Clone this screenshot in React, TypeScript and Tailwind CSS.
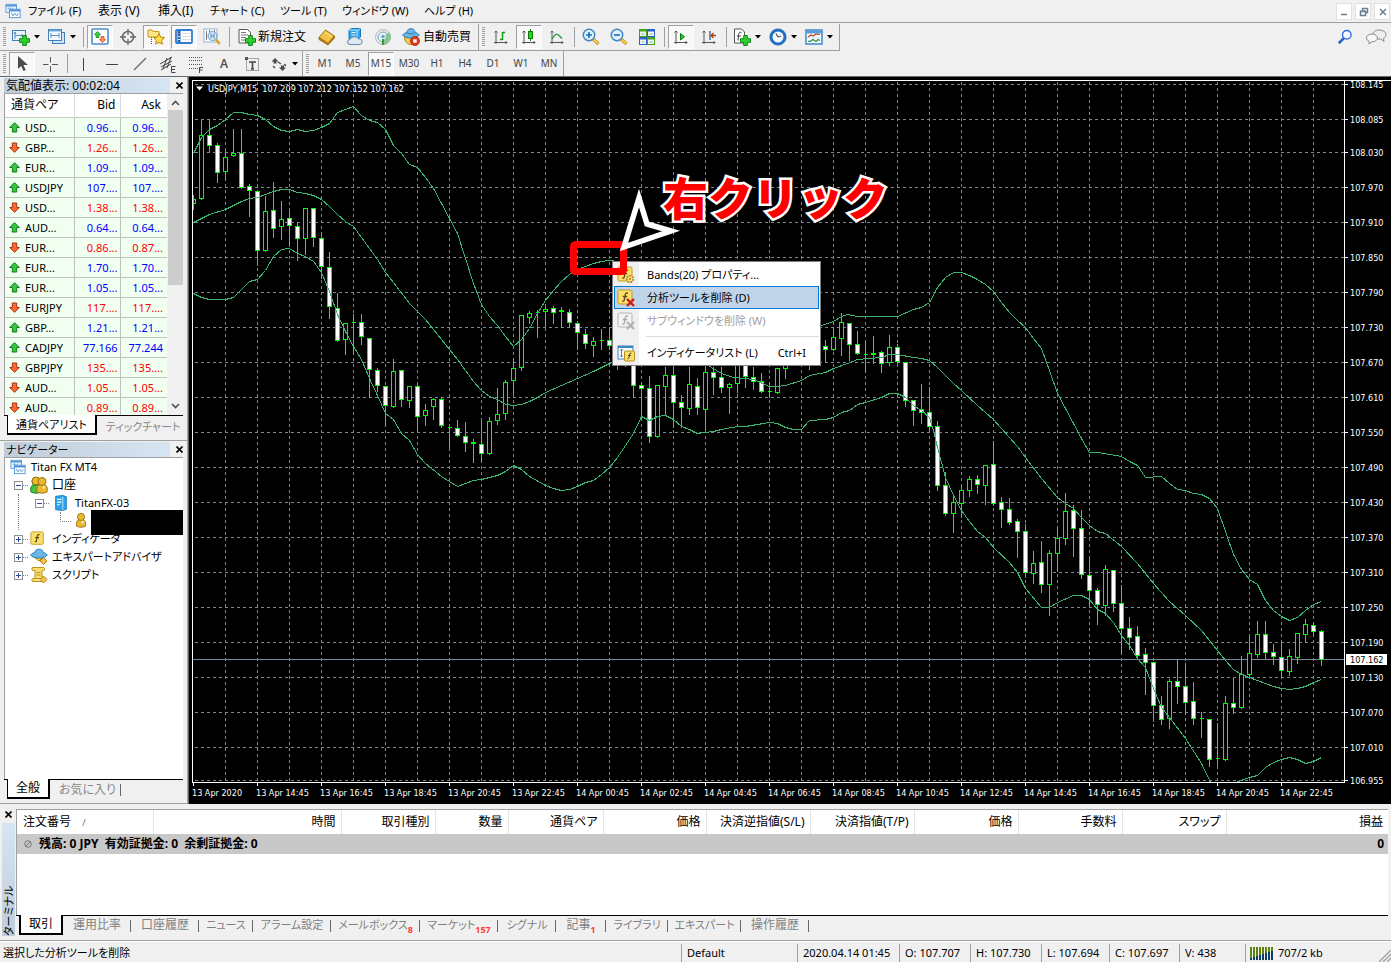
import React from "react";

type Kids = { children?: React.ReactNode };

/* Katakana labels run wide, so they are set one step smaller than kanji ones. */
const labelSize = (t: string) => (/[ァ-ヶー]/.test(t) ? "text-[11px]" : "text-xs");

/* ---------- icons ---------- */

function Svg({ children, s = 18 }: Kids & { s?: number }) {
  return (
    <svg width={s} height={s} viewBox="0 0 18 18" fill="none" className="shrink-0" aria-hidden="true">
      {children}
    </svg>
  );
}

const Plus = ({ x = 7, y = 7 }: { x?: number; y?: number }) => (
  <path
    transform={`translate(${x} ${y})`}
    d="M3.700 .5h3.600v3.200h3.200v3.600H7.300v3.200H3.700V7.300H.5V3.700h3.200z"
    fill="#2fd02f"
    stroke="#0b8a12"
  />
);

const AppIcon = () => (
  <Svg s={16}>
    <rect x="1" y="1.500" width="12" height="9" fill="#e9f4ff" stroke="#5b9bd5" />
    <path d="M1 3h12" stroke="#5b9bd5" strokeWidth="2" />
    <path d="M3 7l2-2 2 3 2-3" stroke="#5b9bd5" />
    <rect x="5" y="7" width="12" height="9.500" fill="#fff" stroke="#4a90d9" />
    <path d="M5 8.500h12" stroke="#4a90d9" strokeWidth="2" />
    <path d="M7 11l2 3.500 2-3 2 3 2-3" stroke="#4a90d9" />
  </Svg>
);
const NewChart = () => (
  <Svg>
    <rect x=".5" y="2.500" width="13" height="10" fill="#eaf4ff" stroke="#3f7fb5" />
    <path d="M3 4v7M2 6l1-2 1 2M3 7.500h8M9.500 6l1.500 1.500L9.500 9" stroke="#5a8fbe" />
    <Plus />
  </Svg>
);
const Profiles = () => (
  <Svg>
    <rect x="4.500" y="4.500" width="12" height="11" fill="#cfe4f7" stroke="#3f7fb5" />
    <rect x=".5" y="1.500" width="13" height="11" fill="#f3f9ff" stroke="#3f7fb5" />
    <path d="M1 2.500h12" stroke="#6aa5dc" strokeWidth="2" />
    <path d="M3 5v5M11 5v5M3 7.500h8" stroke="#5a8fbe" />
  </Svg>
);
const MarketWatchIcon = () => (
  <Svg>
    <rect x="1" y="1" width="16" height="15" rx="1" fill="#fff" stroke="#4a8fd0" strokeWidth="1.600" />
    <path d="M6.500 3.500l3 3H8v3H5v-3H3.500z" fill="#3fd04a" stroke="#168a20" strokeWidth=".8" />
    <path d="M11.500 14.500l-3-3H10v-3h3v3h1.500z" fill="#ff9860" stroke="#d8481c" strokeWidth=".8" />
  </Svg>
);
const DataWindow = () => (
  <Svg>
    <circle cx="9" cy="9" r="5.500" stroke="#666" strokeWidth="1.500" />
    <path d="M9 1v6M9 11v6M1 9h6M11 9h6" stroke="#666" strokeWidth="1.300" />
  </Svg>
);
const NavigatorIcon = () => (
  <Svg>
    <path d="M1 2h4l1 1.500h6V9H1z" fill="#fbe68b" stroke="#c79a1c" />
    <path d="M4.500 9v7" stroke="#555" strokeDasharray="1 1" />
    <path d="M12 5.500l1.700 3.600 3.800.5-2.800 2.700.7 3.900-3.400-1.900-3.400 1.900.7-3.900-2.800-2.700 3.800-.5z" fill="#ffe04a" stroke="#b8860b" />
  </Svg>
);
const TerminalIcon = () => (
  <Svg>
    <rect x="1" y="2" width="16" height="13" rx="1" fill="#fff" stroke="#2f7fd0" strokeWidth="1.800" />
    <path d="M4 3v11" stroke="#1f5fae" strokeWidth="3" />
    <path d="M7 5.500h9M7 8.500h9M7 11.500h9" stroke="#d9dfe6" />
    <path d="M3 5.500h2" stroke="#ff5b3a" />
    <path d="M3 8.500h2M3 11.500h2" stroke="#d9e8ff" />
  </Svg>
);
const Tester = () => (
  <Svg>
    <rect x="1" y="1" width="13" height="13" fill="#fff" stroke="#8fb3d3" />
    <path d="M3.500 3v9M6.500 2v4M11.500 2v4" stroke="#777" />
    <circle cx="9.500" cy="8" r="4.500" fill="#cfe7fa" fillOpacity=".9" stroke="#6d9fc9" />
    <path d="M8 5.500v5M11 5.500v5M8 8h3" stroke="#5a8fbe" />
    <path d="M12.800 11.500l4 4.500" stroke="#d9a520" strokeWidth="2.500" />
  </Svg>
);
const OrderIcon = () => (
  <Svg>
    <path d="M1 1.500h8.500l3 3V15H1z" fill="#fff" stroke="#555" />
    <path d="M3 4.500h5M3 7h7M3 9.500h5M3 12h4" stroke="#777" />
    <Plus />
  </Svg>
);
const Book = () => (
  <Svg>
    <path d="M1 9.500L7.500 2l9 6-6.500 7.500z" fill="#f3c24a" stroke="#a8720c" />
    <path d="M1 9.500v2L10 17l6.500-7V8L10 15.500z" fill="#c98a18" stroke="#8f5f08" strokeWidth=".8" />
    <path d="M7 4.500l6.500 4" stroke="#ffe7a0" />
  </Svg>
);
const Vps = () => (
  <Svg>
    <path d="M3 2l3-1.500h8.500V9L12 11H3z" fill="#2ba5ee" stroke="#1379bb" />
    <path d="M3 2h8v9M11 3l3.500-2.500" stroke="#bfe5ff" />
    <path d="M5.500 4.500h4M5.500 7h4" stroke="#e9f7ff" />
    <path d="M4 16.500a2.500 2.500 0 010-5 4.500 3.800 0 018.500-.5 2.800 2.800 0 011.500 5.500z" fill="#dfe8f5" stroke="#6f86ab" />
  </Svg>
);
const Signals = () => (
  <Svg>
    <circle cx="9" cy="9" r="7.500" fill="#e7edf1" stroke="#a9bccb" />
    <circle cx="9" cy="9" r="5" stroke="#7fa9c6" />
    <path d="M9 9v8a8 8 0 006-13z" fill="#74bd74" fillOpacity=".75" />
    <circle cx="9" cy="8.500" r="2.300" fill="#59a8dc" stroke="#fff" />
    <path d="M9 11v6" stroke="#3c963c" strokeWidth="2" />
  </Svg>
);
const AutoTrade = () => (
  <Svg>
    <path d="M2.500 9c0 5 3 7.500 7 7.500s6-3 6-7.500z" fill="#f6cb58" stroke="#b98313" />
    <path d="M.7 7c1-1.800 3.500-2.300 4.300-2.500C5 1.500 7 .7 9 .7s4 .8 4 3.800c1 .2 3.500 1 4.300 2.500-1 2-5 3-8.300 3S1.500 9 .7 7z" fill="#6bb7e6" stroke="#2c7fb5" />
    <path d="M5 4.800c2 1.500 6 1.500 8 0" stroke="#2c7fb5" />
    <circle cx="13" cy="13" r="4.500" fill="#e43a1c" stroke="#a81e08" strokeWidth=".8" />
    <rect x="11.300" y="11.300" width="3.400" height="3.400" fill="#fff" />
  </Svg>
);
const Axes = () => (
  <path d="M4 3v13M2 14.500h13M2.500 4.500L4 3l1.500 1.500M13.500 13l1.500 1.500-1.500 1.500" stroke="#555" />
);
const BarChart = () => (
  <Svg>
    <Axes />
    <path d="M10.500 4v8M10.500 4.500h2.500M8 11.500h2.500" stroke="#159a15" strokeWidth="1.500" />
  </Svg>
);
const CandleIcon = () => (
  <Svg>
    <Axes />
    <path d="M10.500 1v12" stroke="#0b7d0b" />
    <rect x="8.500" y="3.500" width="4" height="7" fill="#25d625" stroke="#0b7d0b" />
  </Svg>
);
const LineIcon = () => (
  <Svg>
    <Axes />
    <path d="M4 11c3-5 5-6 7-3.500l3 3" stroke="#1f9a3a" strokeWidth="1.300" />
  </Svg>
);
const ZoomIcon = ({ minus }: { minus?: boolean }) => (
  <Svg>
    <path d="M11 11l5.500 5" stroke="#c8951a" strokeWidth="3.200" />
    <path d="M11.500 11.500l4.500 4" stroke="#ffdb66" strokeWidth="1.500" />
    <circle cx="7" cy="7" r="5.700" fill="#dff1ff" stroke="#3f86c4" strokeWidth="1.500" />
    <path d={minus ? "M4 7h6" : "M4 7h6M7 4v6"} stroke="#1d6fb4" strokeWidth="1.600" />
  </Svg>
);
const Tile = () => (
  <Svg>
    <rect x="1" y="1" width="8" height="8" fill="#3fa51c" />
    <rect x="9" y="1" width="8" height="8" fill="#2f62d0" />
    <rect x="1" y="9" width="8" height="8" fill="#2f62d0" />
    <rect x="9" y="9" width="8" height="8" fill="#3fa51c" />
    <path d="M2 3.500h6v4.500H2zM10 3.500h6v4.500h-6zM2 11.500h6V16H2zM10 11.500h6V16h-6z" fill="#eef5ea" />
    <path d="M3.500 6h3M11.500 6h3M3.500 14h3M11.500 14h3" stroke="#9bb39b" />
  </Svg>
);
const AutoScroll = () => (
  <Svg>
    <Axes />
    <path d="M8.500 5.500v6.500l4-3.200z" fill="#25c625" stroke="#0b7d0b" />
  </Svg>
);
const Shift = () => (
  <Svg>
    <Axes />
    <path d="M10 3v9" stroke="#2a5f9a" strokeWidth="1.300" />
    <path d="M16 7.500h-4.500M13.500 5l-2.500 2.500 2.500 2.500" stroke="#b04010" strokeWidth="1.300" />
  </Svg>
);
const AddIndicator = () => (
  <Svg>
    <path d="M1.500 1h7l3 3v11h-10z" fill="#fff" stroke="#555" />
    <path d="M8.500 4.500c-2-.8-2.500 0-2.800 2L5 12.500M3.800 8h4" stroke="#444" />
    <Plus />
  </Svg>
);
const Clock = () => (
  <Svg>
    <circle cx="9" cy="9" r="6.800" fill="#f4f9ff" stroke="#1c6fc9" strokeWidth="2.600" />
    <path d="M9 9l3.200-1M9 9L7 5.500" stroke="#555" strokeWidth="1.300" />
    <circle cx="9" cy="9" r="8.200" stroke="#114d94" strokeWidth=".6" />
  </Svg>
);
const Template = () => (
  <Svg>
    <rect x="1" y="2" width="16" height="14" fill="#fff" stroke="#4a8fd0" strokeWidth="1.600" />
    <path d="M1 4h16" stroke="#5b9bd5" strokeWidth="3" />
    <path d="M3 9l3-2 2 1 3-2 4 .5" stroke="#b03a1a" strokeWidth="1.200" />
    <path d="M3 13l2 .5 3-2 3 2 2-2 2 1" stroke="#1e8f3a" strokeWidth="1.200" />
    <path d="M2 10h14" stroke="#c9dff2" />
  </Svg>
);
const CursorIcon = () => (
  <Svg>
    <path d="M5 1v13l3.200-3 2.300 5 2.200-1-2.300-4.900H15z" fill="#4b4b4b" />
  </Svg>
);
const Cross = () => (
  <Svg>
    <path d="M9.500 2v5.500M9.500 11v6M2 9.500h5.500M11 9.500h6" stroke="#555" />
  </Svg>
);
const VLine = () => <Svg><path d="M8.500 3v13" stroke="#444" /></Svg>;
const HLine = () => <Svg><path d="M3 9.500h12" stroke="#444" /></Svg>;
const Diag = () => <Svg><path d="M3 15L15 3" stroke="#666" strokeWidth="1.200" /></Svg>;
const Channel = () => (
  <Svg>
    <path d="M1 9L13 2M2 12l11-6M2 15l10-6M4 14L8 3M8 13l4-11" stroke="#444" />
    <path d="M16.500 11.500h-4v6h4M12.500 14.500h3.500" stroke="#444" />
  </Svg>
);
const Fib = () => (
  <Svg>
    <path d="M2 2.500h14M2 5.500h14M2 9.500h14M2 13.500h9" stroke="#555" strokeDasharray="1 1" />
    <path d="M16 12.500h-3.500V18M12.500 15h3" stroke="#444" />
  </Svg>
);
const TextLabel = () => (
  <Svg>
    <rect x="3.500" y="3.500" width="12" height="12" stroke="#555" strokeDasharray="1 1" />
    <rect x="2" y="2" width="3" height="3" fill="#555" />
    <path d="M6 7h7M9.500 7v7M8 14h3" stroke="#444" strokeWidth="1.600" />
  </Svg>
);
const Shapes = () => (
  <Svg>
    <path d="M5 3l3.500 3.500H6.500v2h-3v-2H1.500zM12.500 16L9 12.500h2v-2h3v2h2z" fill="#4b4b4b" />
    <path d="M3 11l2 2M8 7l3 2M14 9.500l2 1" stroke="#4b4b4b" strokeWidth="1.400" />
  </Svg>
);
const SearchIcon = () => (
  <Svg s={16}>
    <path d="M8 10l-6 6" stroke="#2b5fd0" strokeWidth="3" />
    <circle cx="11" cy="6.500" r="4.800" fill="#f3f8ff" stroke="#2f66d8" strokeWidth="1.500" />
  </Svg>
);
const Chat = () => (
  <svg width="22" height="18" viewBox="0 0 22 18" fill="none" aria-hidden="true">
    <path d="M14 2c4 0 7 2 7 4.500 0 1.800-1 3-2.500 3.800l.5 3-3.500-2.300C11 11.500 8 9 8 6.500S10.500 2 14 2z" fill="#eee" stroke="#8a8a8a" />
    <path d="M7 6c3 0 5.500 1.700 5.500 4S10 13.800 7 13.800L4 16l.2-2.800C2.500 12.500 1.500 11.500 1.500 10c0-2.300 2.500-4 5.500-4z" fill="#f8f8f8" stroke="#8a8a8a" />
  </svg>
);
const UpArrow = () => (
  <svg width="11" height="11" viewBox="0 0 11 11" className="shrink-0" aria-hidden="true">
    <path d="M5.500.7l4.800 4.800H7.700V10H3.300V5.500H.7z" fill="#35c83f" stroke="#127a1c" />
  </svg>
);
const DownArrow = () => (
  <svg width="11" height="11" viewBox="0 0 11 11" className="shrink-0" aria-hidden="true">
    <path d="M5.500 10.300L.7 5.500h2.600V1h4.400v4.500h2.600z" fill="#ff6a33" stroke="#a8320c" />
  </svg>
);
const Person = ({ x = 0, fill = "#e8b930", line = "#9a7410" }) => (
  <g transform={`translate(${x} 0)`}>
    <path d="M2 16c-1-4 .5-7 3-7.500h4c2.500.5 4 3.500 3 7.500-3 1.500-7 1.500-10 0z" fill={fill} stroke={line} />
    <circle cx="7" cy="5.500" r="4" fill={fill} stroke={line} />
    <path d="M7.500 10l1 4 2-3.500" fill="#fff6cf" />
  </g>
);
const Accounts = () => (
  <Svg>
    <Person x={-1} fill="#3fc43f" line="#1b7d1b" />
    <circle cx="6" cy="5" r="4" fill="#e8b930" stroke="#9a7410" />
    <Person x={5} />
  </Svg>
);
const PersonIcon = () => <Svg s={16}><Person x={2} /></Svg>;
const Server = () => (
  <Svg s={16}>
    <path d="M3 1.500l8-1 4 1.500v14l-4 1.500-8-1z" fill="#2ba5ee" stroke="#1379bb" />
    <path d="M11 2v15" stroke="#bfe5ff" />
    <path d="M4.500 5h5M4.500 8h5M4.500 11h3" stroke="#fff" strokeWidth="1.300" />
  </Svg>
);
const FBox = ({ gray }: { gray?: boolean }) => (
  <>
    <rect x="1" y="1" width="14" height="14" rx="1.500" fill={gray ? "#f3f3f3" : "#fadf6d"} stroke={gray ? "#b5b5b5" : "#c39a22"} />
    <path d="M11 4.300c-1.800-.8-2.600 0-2.900 2l-.8 4.500c-.2 1.200-.8 1.500-2 1M5.800 7.500h4.400" stroke={gray ? "#aaa" : "#5c4a12"} strokeWidth="1.300" />
  </>
);
const IndicatorIcon = () => <Svg s={16}><FBox /></Svg>;
const Expert = () => (
  <Svg>
    <path d="M4 9l5 4 4-4z" fill="#f6cb58" stroke="#b98313" />
    <path d="M.7 7c1-1.800 3.500-2.300 4.300-2.500C5 2 7 1.200 9 1.200s4 .8 4 3.300c1 .2 3.500 1 4.300 2.500-1 2-5 3-8.300 3S1.500 9 .7 7z" fill="#6bb7e6" stroke="#2c7fb5" />
    <path d="M13.500 9.500l3.500 3.500-3.500 3.500-3.500-3.500z" fill="#f3c24a" stroke="#b98313" />
  </Svg>
);
const Script = () => (
  <Svg>
    <path d="M3 1.500h10.500c1.500 0 1.500 3 0 3H12v8h-7v-8H3c-1.500 0-1.500-3 0-3z" fill="#fbe06b" stroke="#b98f1e" />
    <path d="M5 12.500H3c-1.500 0-1.500 3 0 3h9" fill="#fbe06b" stroke="#b98f1e" />
    <path d="M6.500 6.500h4M6.500 9h4" stroke="#b98f1e" />
    <path d="M13.500 10l3.500 3.500-3.500 3.500-3.500-3.500z" fill="#f3c24a" stroke="#b98313" />
  </Svg>
);
const PropIcon = () => (
  <Svg>
    <FBox />
    <circle cx="13" cy="13" r="3.200" fill="#fff3b0" stroke="#b98f1e" strokeWidth="2" strokeDasharray="2 .8" />
    <circle cx="13" cy="13" r="1.200" fill="#b98f1e" />
  </Svg>
);
const DelIcon = () => (
  <Svg>
    <FBox />
    <path d="M10 10l7 7M17 10l-7 7" stroke="#d01818" strokeWidth="2.400" />
  </Svg>
);
const DelGray = () => (
  <Svg>
    <FBox gray />
    <path d="M10 10l7 7M17 10l-7 7" stroke="#b0b0b0" strokeWidth="2" />
  </Svg>
);
const ListIcon = () => (
  <Svg>
    <rect x="1" y="2" width="15" height="13" fill="#fff" stroke="#3f86c4" />
    <path d="M1 3h15" stroke="#3f86c4" strokeWidth="2" />
    <path d="M4.500 5v8M3 6.500L4.500 5 6 6.500M3 11.500L4.500 13 6 11.500" stroke="#4a7fb0" />
    <rect x="7.500" y="7" width="10" height="10" rx="1" fill="#fadf6d" stroke="#b98f1e" />
    <path d="M14.500 9.300c-1.500-.6-1.800 0-2 1.500l-.6 3c-.2.900-.6 1.100-1.400.8M11 11.500h3" stroke="#5c4a12" />
  </Svg>
);

/* ---------- toolbar parts ---------- */

const Caret = () => (
  <svg width="6" height="4" viewBox="0 0 6 4" aria-hidden="true"><path d="M0 0h6L3 3.500z" fill="#000" /></svg>
);
function Tool({ label, on, children }: Kids & { label: string; on?: boolean }) {
  return (
    <button aria-label={label} aria-pressed={on} className="flex h-full w-7 shrink-0 items-center justify-center">
      <span
        className={
          on
            ? "flex h-6 w-[26px] items-center justify-center border border-t-[#a0a0a0] border-l-[#a0a0a0] border-r-white border-b-white bg-[#f8f8f8]"
            : "flex items-center justify-center"
        }
      >
        {children}
      </span>
    </button>
  );
}
const DropTool = ({ label, children }: Kids & { label: string }) => (
  <button aria-label={label} className="flex h-full w-9 shrink-0 items-center gap-1 pl-1">
    {children}
    <Caret />
  </button>
);
const Sep = () => (
  <span className="flex h-full w-[6px] shrink-0 justify-center py-[3px]"><span className="w-px bg-[#a0a0a0]" /></span>
);
const Grip = () => (
  <span className="flex h-full w-2 shrink-0 items-center justify-center">
    <svg width="3" height="20" viewBox="0 0 3 20" aria-hidden="true">
      <path d="M1.500 0v20" stroke="#a0a0a0" strokeWidth="3" strokeDasharray="1 1" />
    </svg>
  </span>
);

const MENUS: [string, string][] = [
  ["ファイル (F)", "w-[70px]"],
  ["表示 (V)", "w-[60px]"],
  ["挿入(I)", "w-[52px]"],
  ["チャート (C)", "w-[70px]"],
  ["ツール (T)", "w-[62px]"],
  ["ウィンドウ (W)", "w-[82px]"],
  ["ヘルプ (H)", "w-[70px]"],
];

function MenuBar() {
  return (
    <header className="flex h-[23px] shrink-0 items-center border-b border-[#a0a0a0] pl-[5px]">
      <AppIcon />
      <nav className="ml-[7px] flex items-center leading-5">
        {MENUS.map(([t, w]) => (
          <button key={t} className={`${w} ${labelSize(t)} text-left whitespace-nowrap`}>{t}</button>
        ))}
      </nav>
      <div className="ml-auto flex gap-[3px] pr-px">
        {[
          ["最小化", "M4 10.500h6"],
          ["元に戻す", "M6.500 6V4.500h5v4H10M4.500 7.500h5v4h-5zM4.500 7h5"],
          ["閉じる", "M5 5l6 6M11 5l-6 6"],
        ].map(([l, d]) => (
          <button key={l} aria-label={l} className="flex h-[17px] w-4 items-center justify-center border border-[#e0e0e0] bg-white">
            <svg width="15" height="15" viewBox="0 0 15 15" fill="none" className="shrink-0" aria-hidden="true"><path d={d} stroke="#6b7f92" strokeWidth="1.500" /></svg>
          </button>
        ))}
      </div>
    </header>
  );
}

function MainToolbar() {
  return (
    <div className="flex h-[28px] shrink-0 items-center">
      <div className="flex h-[27px] items-center border-r border-b border-[#a0a0a0]">
        <Grip />
        <DropTool label="新規チャート"><NewChart /></DropTool>
        <DropTool label="組表示"><Profiles /></DropTool>
        <Sep />
        <Tool label="気配値表示" on><MarketWatchIcon /></Tool>
        <Tool label="データウィンドウ"><DataWindow /></Tool>
        <Tool label="ナビゲーター" on><NavigatorIcon /></Tool>
        <Tool label="ターミナル" on><TerminalIcon /></Tool>
        <Tool label="ストラテジーテスター"><Tester /></Tool>
        <Sep />
        <button className="flex h-full w-[81px] shrink-0 items-center gap-[2px] pl-[6px] text-xs whitespace-nowrap"><OrderIcon />新規注文</button>
        <Tool label="メタエディター"><Book /></Tool>
        <Tool label="VPS"><Vps /></Tool>
        <Tool label="シグナル"><Signals /></Tool>
        <button className="flex h-full w-[81px] shrink-0 items-center gap-[3px] pl-[5px] text-xs whitespace-nowrap"><AutoTrade />自動売買</button>
      </div>
      <div className="flex h-[27px] items-center border-r border-b border-[#a0a0a0] pr-[2px]">
        <Grip />
        <Tool label="バーチャート"><BarChart /></Tool>
        <Tool label="ローソク足" on><CandleIcon /></Tool>
        <Tool label="ラインチャート"><LineIcon /></Tool>
        <Sep />
        <Tool label="拡大"><ZoomIcon /></Tool>
        <Tool label="縮小"><ZoomIcon minus /></Tool>
        <Tool label="整列"><Tile /></Tool>
        <Sep />
        <Tool label="自動スクロール" on><AutoScroll /></Tool>
        <Tool label="チャートシフト"><Shift /></Tool>
        <Sep />
        <DropTool label="インディケータリスト"><AddIndicator /></DropTool>
        <DropTool label="時間足設定"><Clock /></DropTool>
        <DropTool label="定型チャート"><Template /></DropTool>
      </div>
      <div className="ml-auto flex items-center gap-3 pr-1">
        <button aria-label="検索"><SearchIcon /></button>
        <button aria-label="チャット"><Chat /></button>
      </div>
    </div>
  );
}

function DrawToolbar() {
  return (
    <div className="flex h-[25px] shrink-0 items-center">
      <div className="flex h-full items-center border-r border-[#a0a0a0]">
        <Grip />
        <Tool label="カーソル" on><CursorIcon /></Tool>
        <Tool label="クロスヘア"><Cross /></Tool>
        <Sep />
        <Tool label="垂直線"><VLine /></Tool>
        <Tool label="水平線"><HLine /></Tool>
        <Tool label="トレンドライン"><Diag /></Tool>
        <Tool label="チャネル"><Channel /></Tool>
        <Tool label="フィボナッチ"><Fib /></Tool>
        <Tool label="テキスト"><span className="text-xs font-semibold text-[#555]">A</span></Tool>
        <Tool label="テキストラベル"><TextLabel /></Tool>
        <DropTool label="矢印"><Shapes /></DropTool>
      </div>
      <div className="flex h-full items-center border-r border-[#a0a0a0] text-[10px] text-[#444]">
        <Grip />
        {["M1", "M5", "M15", "M30", "H1", "H4", "D1", "W1", "MN"].map((p) => (
          <Tool key={p} label={p} on={p === "M15"}>{p}</Tool>
        ))}
      </div>
    </div>
  );
}

/* ---------- left side ---------- */

function PanelTitle({ children }: { children: string }) {
  return (
    <div className="flex h-[15px] shrink-0 items-center">
      <h2 className="flex-1 bg-gradient-to-r from-[#bfcddb] to-[#d7e4f2] pl-[2px] text-xs leading-[15px] whitespace-nowrap">
        <span className={labelSize(children)}>{children}</span>
      </h2>
      <button aria-label="閉じる" className="flex w-[13px] justify-end">
        <svg width="7" height="7" viewBox="0 0 7 7" aria-hidden="true"><path d="M.5.5l6 6M6.500.5l-6 6" stroke="#000" strokeWidth="1.600" /></svg>
      </button>
    </div>
  );
}

function Tabs({ items }: { items: string[] }) {
  return (
    <div className="flex h-[21px] shrink-0 overflow-hidden leading-[19px]" role="tablist">
      <span className="w-[3px] shrink-0 border-t border-black" />
      <button role="tab" aria-selected="true" className={`${labelSize(items[0])} h-5 shrink-0 border-r-2 border-b-2 border-l border-black bg-white px-2 whitespace-nowrap`}>{items[0]}</button>
      <span className="flex min-w-0 flex-1 border-t border-black">
        <button role="tab" className={`${labelSize(items[1])} pr-1 pl-[9px] whitespace-nowrap text-[#888]`}>{items[1]}</button>
        <span className="mt-1 h-3 w-px bg-[#666]" />
      </span>
    </div>
  );
}

const QUOTES: [string, string, string, number][] = [
  ["USD...", "0.96...", "0.96...", 1],
  ["GBP...", "1.26...", "1.26...", 0],
  ["EUR...", "1.09...", "1.09...", 1],
  ["USDJPY", "107....", "107....", 1],
  ["USD...", "1.38...", "1.38...", 0],
  ["AUD...", "0.64...", "0.64...", 1],
  ["EUR...", "0.86...", "0.87...", 0],
  ["EUR...", "1.70...", "1.70...", 1],
  ["EUR...", "1.05...", "1.05...", 1],
  ["EURJPY", "117....", "117....", 0],
  ["GBP...", "1.21...", "1.21...", 1],
  ["CADJPY", "77.166", "77.244", 1],
  ["GBPJPY", "135....", "135....", 0],
  ["AUD...", "1.05...", "1.05...", 0],
  ["AUD...", "0.89...", "0.89...", 0],
];

function MarketWatch() {
  return (
    <section className="flex h-[364px] shrink-0 flex-col border-r border-b border-[#a0a0a0] pt-px pr-1 pl-1">
      <PanelTitle>気配値表示: 00:02:04</PanelTitle>
      <div className="flex min-h-0 flex-1 items-start overflow-hidden border-t border-l border-[#a0a0a0] bg-white">
        <table className="flex-1 table-fixed border-collapse text-[11px]">
          <thead>
            <tr className="h-[23px] border-b border-[#c8c8c8]">
              <th className="w-[69px] border-r border-[#ddd] pl-[6px] text-left text-xs font-normal">通貨ペア</th>
              <th className="w-[46px] border-r border-[#ddd] pr-1 text-right text-xs font-normal">Bid</th>
              <th className="pr-[6px] text-right text-xs font-normal">Ask</th>
            </tr>
          </thead>
          <tbody className="bg-[#f0fff0]">
            {QUOTES.map(([s, b, a, up], i) => (
              <tr key={i} className="h-5 border-b border-[#c0c0c0] leading-[19px]">
                <td className="border-r border-[#c0c0c0]">
                  <span className="flex items-center gap-[5px] pl-1">{up ? <UpArrow /> : <DownArrow />}{s}</span>
                </td>
                <td className={`border-r border-[#c0c0c0] pr-[2px] text-right ${up ? "text-[#0000ff]" : "text-[#ff0000]"}`}>{b}</td>
                <td className={`pr-1 text-right ${up ? "text-[#0000ff]" : "text-[#ff0000]"}`}>{a}</td>
              </tr>
            ))}
          </tbody>
        </table>
        <div className="flex w-4 shrink-0 flex-col items-center justify-between self-stretch bg-[#f0f0f0] py-[6px]">
          <svg width="9" height="6" viewBox="0 0 9 6" fill="none" aria-hidden="true"><path d="M1 5l3.500-3.500L8 5" stroke="#505050" strokeWidth="1.600" /></svg>
          <span className="mt-1 h-[175px] w-[15px] bg-[#cdcdcd]" />
          <span className="flex-1" />
          <svg width="9" height="6" viewBox="0 0 9 6" fill="none" aria-hidden="true"><path d="M1 1l3.500 3.500L8 1" stroke="#505050" strokeWidth="1.600" /></svg>
        </div>
      </div>
      <Tabs items={["通貨ペアリスト", "ティックチャート"]} />
      <div className="h-1 shrink-0" />
    </section>
  );
}

const Toggle = ({ open }: { open?: boolean }) => (
  <svg width="9" height="9" viewBox="0 0 9 9" className="shrink-0" aria-hidden="true">
    <rect x=".5" y=".5" width="8" height="8" fill="#fff" stroke="#919191" />
    <path d={open ? "M2 4.500h5" : "M2 4.500h5M4.500 2v5"} stroke="#2a4a9a" />
  </svg>
);
const Dots = () => <span className="w-[5px] shrink-0 border-t border-dotted border-[#808080]" />;

function Navigator() {
  return (
    <section className="flex min-h-0 flex-1 flex-col border-r border-b border-[#a0a0a0] pt-px pr-1 pl-1">
      <PanelTitle>ナビゲーター</PanelTitle>
      <div className="min-h-0 flex-1 border-t border-l border-[#a0a0a0] bg-white text-xs leading-[18px]">
        <ul className="whitespace-nowrap">
          <li className="flex h-[18px] items-center gap-[5px] pl-[5px]"><AppIcon /><span className="text-[11px]">Titan FX MT4</span></li>
          <li>
            <div className="flex h-[18px] items-center pl-[9px]"><Toggle open /><Dots /><span className="mr-1 ml-[2px]"><Accounts /></span>口座</div>
            <ul className="ml-[13px] border-l border-dotted border-[#808080]">
              <li className="flex h-[18px] items-center pl-[16px]"><Toggle open /><Dots /><span className="mr-[6px] ml-1"><Server /></span><span className="text-[11px]">TitanFX-03</span></li>
              <li className="flex h-[18px] pl-[41px]">
                <span className="mb-2 w-[11px] border-b border-l border-dotted border-[#808080]" />
                <span className="mx-[2px] shrink-0"><PersonIcon /></span>
                <span className="-mt-[2px] -mb-[5px] h-[25px] flex-1 bg-black" />
              </li>
            </ul>
          </li>
          <li className="flex h-[18px] items-center pl-[9px]"><Toggle /><Dots /><span className="mr-[6px] ml-[2px]"><IndicatorIcon /></span><span className="text-[11px]">インディケータ</span></li>
          <li className="flex h-[18px] items-center pl-[9px]"><Toggle /><Dots /><span className="mr-1 ml-[2px]"><Expert /></span><span className="text-[11px]">エキスパートアドバイザ</span></li>
          <li className="flex h-[18px] items-center pl-[9px]"><Toggle /><Dots /><span className="mr-1 ml-[2px]"><Script /></span><span className="text-[11px]">スクリプト</span></li>
        </ul>
      </div>
      <Tabs items={["全般", "お気に入り"]} />
      <div className="h-[3px] shrink-0" />
    </section>
  );
}

/* ---------- chart ---------- */

/* high, body top, body bottom, low, falling */
const CANDLES: number[][] = [
  [194,199,204,209,0],[118,135,199,199,0],[118,135,146,151,1],[142,145,173,182,1],[150,157,172,179,0],
  [128,153,156,156,0],[128,153,188,188,1],[183,186,191,216,1],[191,191,251,265,1],[195,211,251,251,0],
  [181,210,229,237,1],[200,219,227,239,0],[210,218,226,244,1],[221,226,239,260,1],[207,208,239,254,0],
  [207,208,238,246,1],[231,238,267,278,1],[251,267,307,318,1],[292,308,341,341,1],[323,323,340,354,0],
  [313,322,323,354,0],[313,322,337,344,1],[337,338,370,397,1],[367,370,386,391,1],[386,386,406,425,1],
  [358,371,407,407,0],[369,370,400,406,1],[385,386,401,407,0],[382,386,417,430,1],[403,410,416,425,0],
  [397,399,407,419,0],[396,399,426,427,1],[427,427,428,448,0],[419,428,436,436,1],[421,436,443,451,1],
  [438,442,444,462,1],[420,444,454,461,1],[416,421,454,454,0],[387,414,421,424,0],[379,382,414,419,0],
  [357,368,381,393,0],[315,315,368,370,0],[310,313,318,323,0],[309,312,313,337,0],[306,309,312,326,0],
  [305,308,313,323,1],[306,310,312,327,0],[308,312,323,327,1],[320,323,333,349,1],[328,334,344,348,1],
  [336,341,346,356,0],[328,340,341,349,0],[328,340,346,349,1],[340,346,362,369,1],[350,352,362,366,1],
  [360,362,386,396,1],[381,385,389,415,1],[375,388,437,442,1],[384,385,437,437,0],[366,375,387,414,0],
  [366,375,403,427,1],[394,402,408,427,1],[366,384,409,414,0],[377,386,408,414,1],[366,372,410,429,0],
  [366,372,378,394,1],[366,377,388,392,1],[382,384,388,413,0],[350,362,384,392,0],[350,360,377,387,1],
  [366,377,382,389,1],[372,381,392,392,1],[381,391,392,397,0],[367,368,393,393,0],[350,355,369,378,0],
  [345,350,357,362,0],[342,348,352,360,1],[340,345,352,369,0],[340,342,350,360,0],[339,346,350,361,1],
  [326,337,350,350,0],[312,322,339,355,0],[322,323,345,360,1],[330,344,354,354,1],[341,354,355,371,0],
  [335,353,355,363,0],[350,352,364,372,1],[334,347,363,365,0],[343,347,362,363,1],[362,362,401,406,1],
  [399,400,411,425,1],[383,409,413,423,1],[386,412,427,430,1],[420,426,486,490,1],[471,485,514,515,1],
  [496,502,514,532,0],[485,490,504,517,0],[475,479,491,496,0],[474,479,485,493,1],[465,465,486,504,0],
  [440,464,504,505,1],[496,502,510,527,1],[497,509,523,524,1],[518,521,532,557,1],[523,531,573,577,1],
  [550,563,574,583,0],[540,562,585,592,1],[549,553,585,615,0],[528,538,554,571,0],[492,511,539,544,0],
  [504,510,529,556,1],[509,528,575,578,1],[558,575,591,604,1],[587,590,605,624,1],[564,569,606,615,0],
  [569,570,604,611,1],[584,603,629,653,1],[616,628,638,649,1],[625,636,656,659,1],[647,654,663,694,1],
  [662,662,706,721,1],[695,705,720,724,1],[678,681,719,728,0],[658,681,687,703,1],[662,686,703,714,1],
  [681,701,719,724,1],[711,718,719,737,0],[719,719,760,766,1],[722,758,759,765,0],[695,703,760,760,0],
  [677,703,708,713,1],[655,674,708,708,0],[636,653,675,677,0],[620,634,655,657,0],[620,634,653,658,1],
  [643,652,657,664,1],[642,657,671,677,1],[648,656,672,675,0],[633,633,658,663,0],[618,624,635,642,0],
  [621,625,632,635,1],[629,631,660,665,1],
];

const BANDS = [
  "193,153 201,137 209,129 217,125 225,119 233,112 241,112 249,114 257,115 265,119 273,126 281,130 289,131 297,129 305,131 313,130 321,127 329,123 337,112 345,109 353,106 361,115 369,120 377,122 385,129 393,145 401,153 409,164 417,167 425,177 433,188 441,203 449,218 457,233 465,258 473,283 481,304 489,316 497,325 505,336 513,346 521,339 529,328 537,313 545,300 553,290 561,281 569,274 577,269 585,266 593,263 601,261 609,260 617,261 700,300 780,330 821,325 833,321 841,316 847,314 857,316 897,316 913,309 921,307 929,302 937,287 945,277 953,272 961,272 969,275 977,279 985,284 993,291 1001,302 1009,312 1017,320 1025,327 1033,338 1041,348 1049,370 1057,393 1065,408 1073,423 1081,438 1089,452 1097,452 1121,456 1129,461 1137,465 1145,477 1161,476 1169,483 1177,489 1185,490 1193,493 1201,494 1209,498 1217,508 1225,531 1233,554 1241,569 1249,579 1257,584 1265,600 1273,610 1281,616 1289,620 1297,617 1305,610 1313,604 1321,601",
  "193,222 209,214 225,209 241,201 249,198 257,197 265,194 273,191 281,189 289,189 297,192 305,193 313,195 321,199 329,206 337,214 345,221 353,226 361,237 369,248 377,259 385,272 393,282 409,303 425,319 441,339 457,359 473,381 481,390 489,396 497,399 505,404 513,405 521,404 529,401 537,397 545,392 561,385 577,378 593,371 609,363 640,352 690,355 711,367 721,373 733,377 753,379 769,386 777,386 785,385 801,380 809,375 825,372 833,368 847,363 857,359 881,357 889,354 897,354 913,357 921,358 929,360 937,367 953,383 961,390 977,405 993,419 1009,437 1017,446 1025,457 1041,478 1057,497 1065,503 1073,508 1081,517 1089,525 1097,531 1105,533 1121,546 1137,563 1153,583 1169,601 1185,615 1201,630 1217,650 1225,660 1233,669 1241,674 1249,677 1257,680 1265,683 1273,686 1281,688 1289,689 1297,688 1305,686 1313,682 1321,679",
  "193,293 201,297 209,299 225,299 233,297 241,289 249,281 257,279 265,270 273,256 281,249 289,248 297,253 305,256 313,261 321,272 329,291 337,314 345,331 353,346 361,359 369,378 377,395 385,413 393,419 401,433 409,440 417,454 425,463 441,476 449,481 457,486 465,483 473,480 481,479 497,475 505,471 513,465 521,469 529,476 545,485 553,488 561,490 569,489 577,486 585,482 593,480 601,474 609,467 617,457 625,445 633,433 641,416 649,420 657,416 665,415 673,419 681,426 689,429 697,433 713,431 721,429 737,426 745,426 769,422 777,423 785,427 793,429 801,429 809,420 825,419 833,417 841,412 849,410 857,404 865,402 881,397 889,393 897,393 905,397 913,405 921,410 929,417 933,430 937,447 945,477 953,495 961,510 969,521 977,531 985,537 993,547 1009,562 1017,572 1025,588 1041,607 1049,607 1057,602 1073,595 1081,595 1089,599 1097,609 1105,613 1113,622 1121,635 1129,645 1137,658 1145,667 1153,688 1161,707 1169,717 1185,738 1201,763 1210,782",
  "1235,782 1249,777 1257,775 1265,767 1273,762 1281,759 1289,757 1297,759 1305,763 1313,761 1321,757",
];

const PRICES: [number, string][] = [
  [84, "108.145"], [119, "108.085"], [152, "108.030"], [187, "107.970"], [222, "107.910"], [257, "107.850"],
  [292, "107.790"], [327, "107.730"], [362, "107.670"], [397, "107.610"], [432, "107.550"], [467, "107.490"],
  [502, "107.430"], [537, "107.370"], [572, "107.310"], [607, "107.250"], [642, "107.190"], [677, "107.130"],
  [712, "107.070"], [747, "107.010"], [780, "106.955"],
];

const TIMES = [
  "13 Apr 2020", "13 Apr 14:45", "13 Apr 16:45", "13 Apr 18:45", "13 Apr 20:45", "13 Apr 22:45",
  "14 Apr 00:45", "14 Apr 02:45", "14 Apr 04:45", "14 Apr 06:45", "14 Apr 08:45", "14 Apr 10:45",
  "14 Apr 12:45", "14 Apr 14:45", "14 Apr 16:45", "14 Apr 18:45", "14 Apr 20:45", "14 Apr 22:45",
];

function ChartDrawing() {
  const columns = Array.from({ length: 35 }, (_, k) => 225 + 32 * k);
  return (
    <svg
      viewBox="189 77 1202 727"
      preserveAspectRatio="xMinYMin slice"
      className="block h-full w-full font-['DejaVu_Sans_Condensed','Noto_Sans',sans-serif] text-[9px]"
      role="img"
      aria-label="USDJPY M15"
    >
      <rect x="189" y="77" width="1202" height="727" fill="#000" />
      <g transform="translate(.5 .5)" fill="none" shapeRendering="crispEdges">
        <g stroke="#778899" strokeDasharray="3 3">
          {PRICES.map(([y]) => <path key={y} d={`M194 ${y}H1344`} />)}
          {columns.map((x) => <path key={x} d={`M${x} 81V782`} />)}
        </g>
        <path d="M192 659H1344" stroke="#778899" />
        <g stroke="#00ff00">
          {CANDLES.map(([h, t, b, l, falling], i) => {
            const x = 193 + 8 * i;
            return (
              <g key={i}>
                <path d={`M${x} ${h}V${l}`} />
                <path d={`M${i ? x - 2 : x} ${t}H${x + 2}V${b - 1}H${i ? x - 2 : x}z`} fill={falling ? "#fff" : "#000"} />
              </g>
            );
          })}
        </g>
        <g stroke="#3cb371">
          {BANDS.map((p) => <polyline key={p} points={p} />)}
        </g>
        <path d="M1391 80H192V782H1344V80" stroke="#fff" />
        <path d={PRICES.map(([y]) => `M1344 ${y}h3`).join("") + TIMES.map((_, k) => `M${193 + 64 * k} 782v3`).join("")} stroke="#fff" />
      </g>
      <path d="M196 86.500h7l-3.500 4z" fill="#fff" />
      <g fill="#fff">
        <text x="208" y="92" xmlSpace="preserve" className="text-[9px]">USDJPY,M15  107.209 107.212 107.152 107.162</text>
        {PRICES.map(([y, t]) => <text key={t} x="1350" y={y + 4}>{t}</text>)}
        {TIMES.map((t, k) => <text key={t} x={192 + 64 * k} y="796">{t}</text>)}
      </g>
      <rect x="1346" y="654" width="41" height="11" fill="#fff" />
      <text x="1350" y="663" fill="#000">107.162</text>
    </svg>
  );
}

function MenuRow({ icon, label, hint, active, disabled }: { icon: React.ReactNode; label: string; hint?: string; active?: boolean; disabled?: boolean }) {
  return (
    <button
      role="menuitem"
      disabled={disabled}
      className={
        "flex h-[23px] w-full items-center border pl-[2px] text-left whitespace-nowrap " +
        (active ? "border-[#0078d7] bg-[#bfd4e8]" : disabled ? "border-transparent text-[#a0a0a0]" : "border-transparent")
      }
    >
      {icon}
      <span className="ml-3">{label}</span>
      {hint && <span className="mr-3 ml-auto">{hint}</span>}
    </button>
  );
}

function ChartPane() {
  return (
    <main className="relative min-w-0 flex-1 overflow-hidden bg-black">
      <ChartDrawing />
      <div role="menu" className="absolute top-[184px] left-[423px] w-[209px] border border-[#808080] bg-gradient-to-r from-[#f0f0f0] from-[26px] to-white to-[26px] p-px text-[11px] leading-5">
        <MenuRow icon={<PropIcon />} label="Bands(20) プロパティ..." />
        <MenuRow icon={<DelIcon />} label="分析ツールを削除 (D)" active />
        <MenuRow icon={<DelGray />} label="サブウィンドウを削除 (W)" disabled />
        <div className="my-1 ml-8 h-px bg-[#dcdcdc]" />
        <MenuRow icon={<ListIcon />} label="インディケータリスト (L)" hint="Ctrl+I" />
      </div>
      <svg width="140" height="100" viewBox="565 182 140 100" fill="none" className="pointer-events-none absolute top-[105px] left-[376px]" aria-hidden="true">
        <rect x="573.500" y="244.500" width="50" height="27" rx="2" stroke="#ff0000" strokeWidth="7" />
        <path d="M639 198l8 26 24 7-47 16z" fill="#000" stroke="#fff" strokeWidth="5.500" strokeMiterlimit="8" />
      </svg>
      <p className="pointer-events-none absolute top-[94px] left-[474px] font-['Noto_Sans_CJK_JP',sans-serif] text-[45px] leading-[52px] font-black whitespace-nowrap text-[#ff0000] [-webkit-text-stroke:5px_white] [font-feature-settings:normal] [paint-order:stroke_fill]">
        右クリック
      </p>
    </main>
  );
}

/* ---------- terminal and status ---------- */

const COLS: [string, string][] = [
  ["時間", "w-[188px]"], ["取引種別", "w-[94px]"], ["数量", "w-[73px]"], ["通貨ペア", "w-[95px]"], ["価格", "w-[103px]"],
  ["決済逆指値(S/L)", "w-[104px]"], ["決済指値(T/P)", "w-[104px]"], ["価格", "w-[104px]"], ["手数料", "w-[104px]"], ["スワップ", "w-[104px]"],
];

const TERM_TABS: [string, string, string?][] = [
  ["運用比率", "w-[68px]"], ["口座履歴", "w-[68px]"], ["ニュース", "w-[54px]"], ["アラーム設定", "w-[78px]"],
  ["メールボックス", "w-[89px]", "8"], ["マーケット", "w-[78px]", "157"], ["シグナル", "w-[58px]"], ["記事", "w-[50px]", "1"],
  ["ライブラリ", "w-[62px]"], ["エキスパート", "w-[73px]"], ["操作履歴", "w-[68px]"],
];

function Terminal() {
  return (
    <section className="flex h-[137px] shrink-0 border-b border-[#a0a0a0] pt-[5px] pr-[3px]">
      <div className="flex w-4 shrink-0 flex-col items-center pb-1 pl-px">
        <button aria-label="閉じる" className="flex h-[14px] items-start pt-[2px]">
          <svg width="7" height="7" viewBox="0 0 7 7" aria-hidden="true"><path d="M.5.5l6 6M6.500.5l-6 6" stroke="#000" strokeWidth="1.600" /></svg>
        </button>
        <h2 className="flex w-[13px] flex-1 rotate-180 items-center bg-gradient-to-b from-[#bfcddb] to-[#d7e4f2] text-[11px] leading-[13px] whitespace-nowrap [text-orientation:sideways] [writing-mode:vertical-rl]">ターミナル</h2>
      </div>
      <div className="flex min-w-0 flex-1 flex-col">
        <div className="flex-1 border-t border-l border-[#a0a0a0] bg-white">
          <table className="w-full table-fixed border-collapse text-xs">
            <thead>
              <tr className="h-6">
                <th className="w-[136px] border-r border-[#e5e5e5] pl-[6px] text-left font-normal whitespace-nowrap">注文番号 <span className="pl-2 text-[9px] text-[#666]">/</span></th>
                {COLS.map(([t, w], i) => (
                  <th key={i} className={`${w} border-r border-[#e5e5e5] pr-[5px] text-right font-normal whitespace-nowrap`}>{t}</th>
                ))}
                <th className="pr-[5px] text-right font-normal">損益</th>
              </tr>
            </thead>
            <tbody>
              <tr className="h-5 bg-[#c8c8c8] font-bold">
                <td colSpan={11} className="leading-5 whitespace-pre">
                  <span className="flex items-center gap-[7px] pl-[7px]">
                    <svg width="8" height="8" viewBox="0 0 8 8" fill="none" aria-hidden="true"><circle cx="4" cy="4" r="3.300" stroke="#777" /><path d="M2 6l4-4" stroke="#777" /></svg>
                    <span>残高: 0 JPY  有効証拠金: 0  余剰証拠金: 0</span>
                  </span>
                </td>
                <td className="pr-1 text-right">0</td>
              </tr>
            </tbody>
          </table>
        </div>
        <div className="flex h-[25px] shrink-0 text-xs leading-[18px]" role="tablist">
          <span className="w-[3px] border-t border-black" />
          <button role="tab" aria-selected="true" className="h-5 w-11 border-r-2 border-b-2 border-l-2 border-black bg-white">取引</button>
          <span className="flex flex-1 border-t border-black text-[#808080]">
            {TERM_TABS.map(([t, w, n]) => (
              <button role="tab" key={t} className={`${w} ${labelSize(t)} relative flex h-[18px] shrink-0 items-center justify-center whitespace-nowrap`}>
                {t}
                {n && <span className="mt-2 text-[9px] leading-[9px] font-bold text-[#ff3b30]">{n}</span>}
                <span className="absolute top-1 right-0 h-3 w-px bg-[#666]" />
              </button>
            ))}
          </span>
        </div>
      </div>
    </section>
  );
}

const STATUS: [string, string][] = [
  ["Default", "w-[116px]"], ["2020.04.14 01:45", "w-[102px]"], ["O: 107.707", "w-[71px]"], ["H: 107.730", "w-[71px]"],
  ["L: 107.694", "w-[68px]"], ["C: 107.697", "w-[70px]"], ["V: 438", "w-[66px]"],
];

function StatusBar() {
  return (
    <footer className="flex h-[21px] shrink-0 items-stretch border-t border-white pt-[2px] text-[11px] leading-[18px] whitespace-nowrap">
      <span className="flex-1 pl-[3px]">選択した分析ツールを削除</span>
      {STATUS.map(([t, w]) => (
        <span key={t} className={`${w} border-l border-[#a0a0a0] pl-[5px]`}>{t}</span>
      ))}
      <span className="flex w-[146px] items-center gap-1 border-l border-[#a0a0a0] pl-1">
        <svg width="24" height="14" viewBox="0 0 24 14" aria-hidden="true">
          {Array.from({ length: 8 }, (_, k) => (
            <g key={k}>
              <rect x={k * 3} y="1" width="2" height={11 - k} fill="#5f8214" />
              <rect x={k * 3} y={12 - k} width="2" height={2 + k} fill="#0d3f66" />
            </g>
          ))}
        </svg>
        707/2 kb
        <svg width="12" height="12" viewBox="0 0 12 12" className="ml-auto self-end" aria-hidden="true"><path d="M0 12L12 0M4 12l8-8M8 12l4-4" stroke="#a0a0a0" strokeWidth="1.300" /></svg>
      </span>
    </footer>
  );
}

export default function App() {
  return (
    <div className="flex h-screen min-h-[600px] flex-col overflow-hidden bg-[#f0f0f0] font-['Noto_Sans','Noto_Sans_CJK_JP',sans-serif] text-black [font-feature-settings:'palt']">
      <MenuBar />
      <MainToolbar />
      <DrawToolbar />
      <div className="flex min-h-0 flex-1 border-t border-[#696969]">
        <aside className="flex w-[189px] shrink-0 flex-col border-r border-[#696969]">
          <MarketWatch />
          <Navigator />
        </aside>
        <ChartPane />
      </div>
      <Terminal />
      <StatusBar />
    </div>
  );
}
